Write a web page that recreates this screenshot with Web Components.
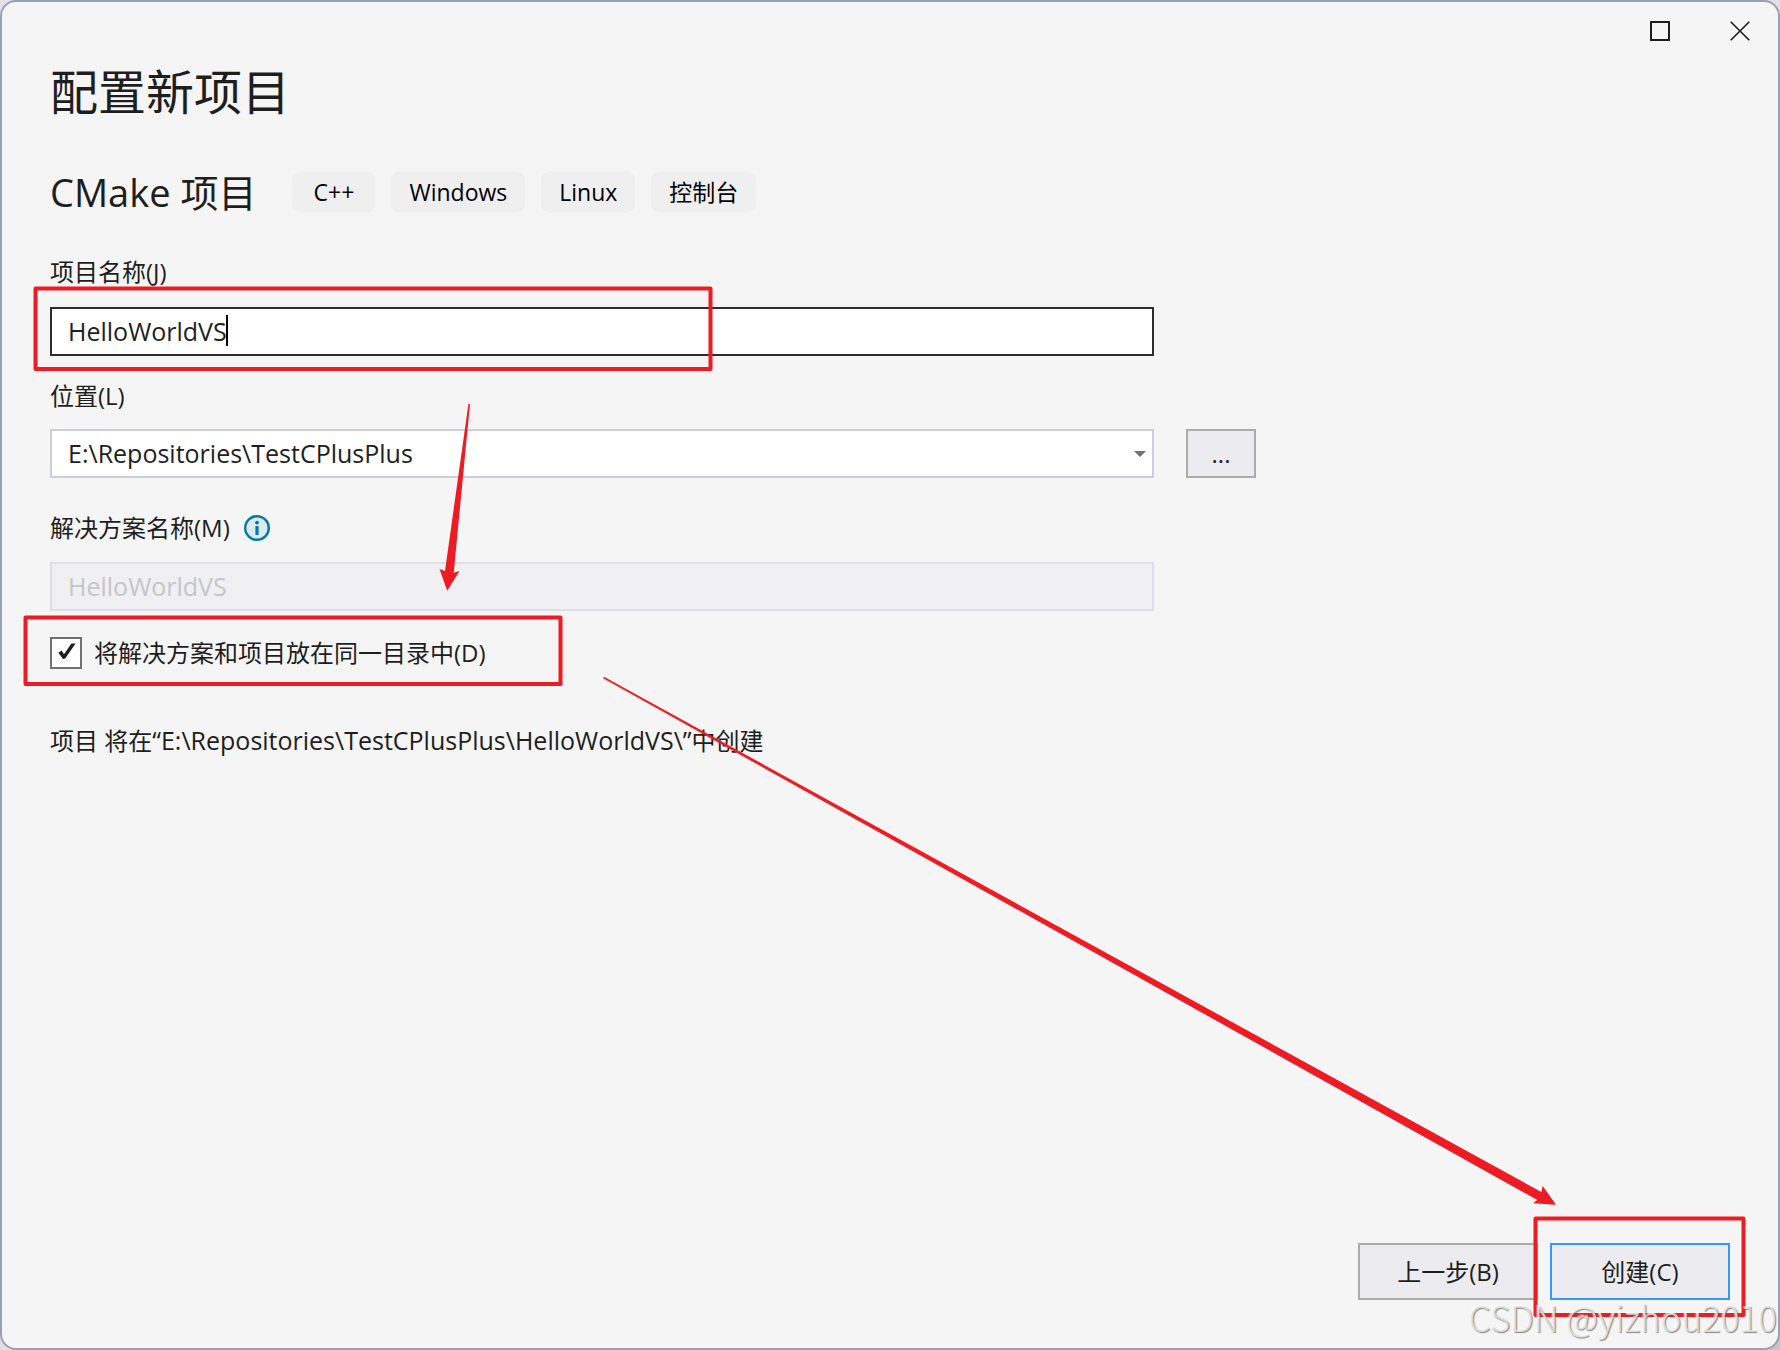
<!DOCTYPE html>
<html lang="zh-CN">
<head>
<meta charset="utf-8">
<title>配置新项目</title>
<style>
  body {
    margin: 0;
    background: linear-gradient(135deg, #e2e2e6, #e0e0e4 60%, #c6c6c9);
    color: #1e1e1e;
    font-family: "Open Sans", "Noto Sans CJK SC", sans-serif;
    font-size: 24px;
    line-height: 32px;
  }
</style>
</head>
<body>
<vs-window>
  <vs-heading>配置新项目</vs-heading>
  <vs-template-title name="CMake 项目">
    <vs-tag>C++</vs-tag>
    <vs-tag>Windows</vs-tag>
    <vs-tag>Linux</vs-tag>
    <vs-tag>控制台</vs-tag>
  </vs-template-title>
  <vs-project-form></vs-project-form>
  <vs-button slot="footer">上一步(B)</vs-button>
  <vs-button slot="footer" primary>创建(C)</vs-button>
</vs-window>
<vs-annotations></vs-annotations>
<vs-watermark>CSDN @yizhou2010</vs-watermark>

<script>
const define = (name, html, setup) => {
  const template = document.createElement('template');
  template.innerHTML = html;
  customElements.define(name, class extends HTMLElement {
    constructor() {
      super();
      this.attachShadow({ mode: 'open' }).append(template.content.cloneNode(true));
    }
    connectedCallback() { if (setup) setup(this, this.shadowRoot); }
  });
};

define('vs-window', `
  <style>
    :host { display: flex; flex-direction: column; box-sizing: border-box; min-height: 100vh;
      border: 2px solid #9b9fb9; border-radius: 16px; background: #f5f5f5; }
    header { display: flex; justify-content: flex-end; height: 58px; }
    header button { width: 80px; padding: 0; border: 0; background: none; display: flex; align-items: center; justify-content: center; }
    header button:last-child { width: 76px; }
    header button:first-child { width: 84px; }
    svg { display: block; }
    main { flex: 1; padding: 0 48px; }
    footer { display: flex; justify-content: flex-end; gap: 12px; padding: 0 48px 48px; }
  </style>
  <header>
    <button aria-label="最大化"><svg width="20" height="20"><rect x="1" y="1" width="18" height="18" fill="none" stroke="#1e1e1e" stroke-width="2"/></svg></button>
    <button aria-label="关闭"><svg width="20" height="20"><path d="M.7.7 19.3 19.3M19.3.7.7 19.3" stroke="#1e1e1e" stroke-width="1.6"/></svg></button>
  </header>
  <main><slot></slot></main>
  <footer><slot name="footer"></slot></footer>`);

define('vs-heading', `
  <style>
    :host { display: block; }
    h1 { margin: 0; font-size: 48px; line-height: 64px; font-weight: 400; }
  </style>
  <h1><slot></slot></h1>`);

define('vs-template-title', `
  <style>
    :host { display: flex; align-items: center; gap: 16px; margin-top: 44px; }
    h2 { margin: 0 20px 0 0; font-size: 38px; line-height: 48px; font-weight: 400; }
  </style>
  <h2></h2><slot></slot>`,
  (el, root) => { root.querySelector('h2').textContent = el.getAttribute('name'); });

define('vs-tag', `
  <style>
    :host { display: block; box-sizing: border-box; min-width: 83px; padding: 0 18px; border-radius: 9px;
      background: #efefef; color: #000; font-size: 23px; line-height: 42px; text-align: center; }
  </style>
  <slot></slot>`);

define('vs-button', `
  <style>
    :host { display: block; }
    button { box-sizing: border-box; width: 180px; height: 57px; padding: 0; border: 2px solid #acacac;
      background: #ececf0; color: #1e1e1e; font: inherit; }
    :host([primary]) button { border-color: #3399ff; }
  </style>
  <button><slot></slot></button>`);

define('vs-info-icon', `
  <style>:host { display: block; } svg { display: block; }</style>
  <svg width="26" height="26" role="img" aria-label="信息">
    <circle cx="13" cy="13" r="11.8" fill="#dce9ee" stroke="#0579a3" stroke-width="2.4"/>
    <circle cx="13" cy="7.6" r="1.9" fill="#0579a3"/>
    <rect x="11.4" y="11" width="3.2" height="9" fill="#0579a3"/>
  </svg>`);

define('vs-project-form', `
  <style>
    :host { display: block; margin-top: 40px; }
    * { box-sizing: border-box; }
    .field { display: flex; flex-direction: column; gap: 18px; margin-bottom: 24px; }
    .field:first-of-type { gap: 19px; }
    .location { gap: 17px; margin-bottom: 34px; }
    .solution { margin-bottom: 26px; }
    .caption, .row, .check { display: flex; align-items: center; }
    .caption { gap: 14px; }
    .row { gap: 32px; }
    .box { position: relative; width: 100%; max-width: 1104px; }
    input[type=text], select { display: block; width: 100%; height: 49px; margin: 0; padding: 0 16px 2px;
      border: 2px solid #cccedb; border-radius: 0; background: #fff; color: #1e1e1e;
      font: inherit; font-size: 25px; outline: 0; appearance: none; }
    #name { border-color: #2d2d30; }
    #solution { border-color: #dedee7; background: #f0f0f3; color: #c6c6c8; }
    .caret { position: absolute; left: 176px; top: 8px; width: 2px; height: 31px; background: #000; }
    .arrow { position: absolute; right: 8px; top: 22px; pointer-events: none; }
    .browse { flex: none; width: 70px; height: 49px; padding: 0; border: 2px solid #acacac; background: #ececf0;
      color: #1e1e1e; font: inherit; }
    .check { gap: 12px; }
    .check input { appearance: none; width: 32px; height: 32px; margin: 0; border: 2px solid #717171; background: #fff; }
    .tick { position: relative; display: flex; }
    .tick svg { position: absolute; left: 8px; top: 6px; pointer-events: none; }
    p { margin: 55px 0 0; }
    .path { font-size: 25px; }
  </style>
  <div class="field">
    <label for="name">项目名称(J)</label>
    <div class="box"><input type="text" id="name" value="HelloWorldVS"><span class="caret"></span></div>
  </div>
  <div class="field location">
    <label for="location">位置(L)</label>
    <div class="row">
      <div class="box">
        <select id="location"><option>E:\\Repositories\\TestCPlusPlus</option></select>
        <svg class="arrow" width="12" height="6"><path d="M0 0H12L6 6Z" fill="#717171"/></svg>
      </div>
      <button class="browse">...</button>
    </div>
  </div>
  <div class="field solution">
    <div class="caption"><label for="solution">解决方案名称(M)</label><vs-info-icon></vs-info-icon></div>
    <div class="box"><input type="text" id="solution" value="HelloWorldVS" disabled></div>
  </div>
  <div class="check">
    <span class="tick"><input type="checkbox" id="same" checked>
      <svg width="18" height="18"><path d="M.4 9.8 3.6 7.6 6 11.2 13.4.6 17.6.6 7.2 15.6 5 16Z" fill="#1e1e1e"/></svg></span>
    <label for="same">将解决方案和项目放在同一目录中(D)</label>
  </div>
  <p>项目 将在<span class="path">“E:\\Repositories\\TestCPlusPlus\\HelloWorldVS\\”</span>中创建</p>`);

define('vs-annotations', `
  <style>
    :host { position: absolute; left: 0; top: 0; pointer-events: none; }
    svg { display: block; }
  </style>
  <svg width="1780" height="1350" fill="#ed1c24" aria-hidden="true">
    <g fill="none" stroke="#ed1c24" stroke-width="4" stroke-linejoin="round">
      <rect x="35.5" y="288.5" width="675" height="80.5"/>
      <rect x="25.5" y="617.5" width="535" height="66.5"/>
      <rect x="1535.5" y="1218.5" width="208" height="96.5"/>
    </g>
    <path d="M468.4 404H470L453.7 572.7 459.5 571 447.2 590.7 439.5 569 445 571Z"/>
    <path d="M603.5 677 604 676.8 1541.3 1192 1542.7 1186 1556 1204.7 1533 1203.3 1537.3 1200 603.5 678.4Z"/>
  </svg>`);

define('vs-watermark', `
  <style>
    :host { position: absolute; right: 3px; bottom: 9px; pointer-events: none;
      font-family: "Noto Sans CJK SC", sans-serif; font-size: 35px; line-height: 48px; font-weight: 300;
      color: rgba(228, 228, 228, .85); text-shadow: 1px 1px 1px rgba(90, 90, 90, .7), -1px -1px 1px rgba(255, 255, 255, .6); }
  </style>
  <slot></slot>`);
</script>
</body>
</html>
